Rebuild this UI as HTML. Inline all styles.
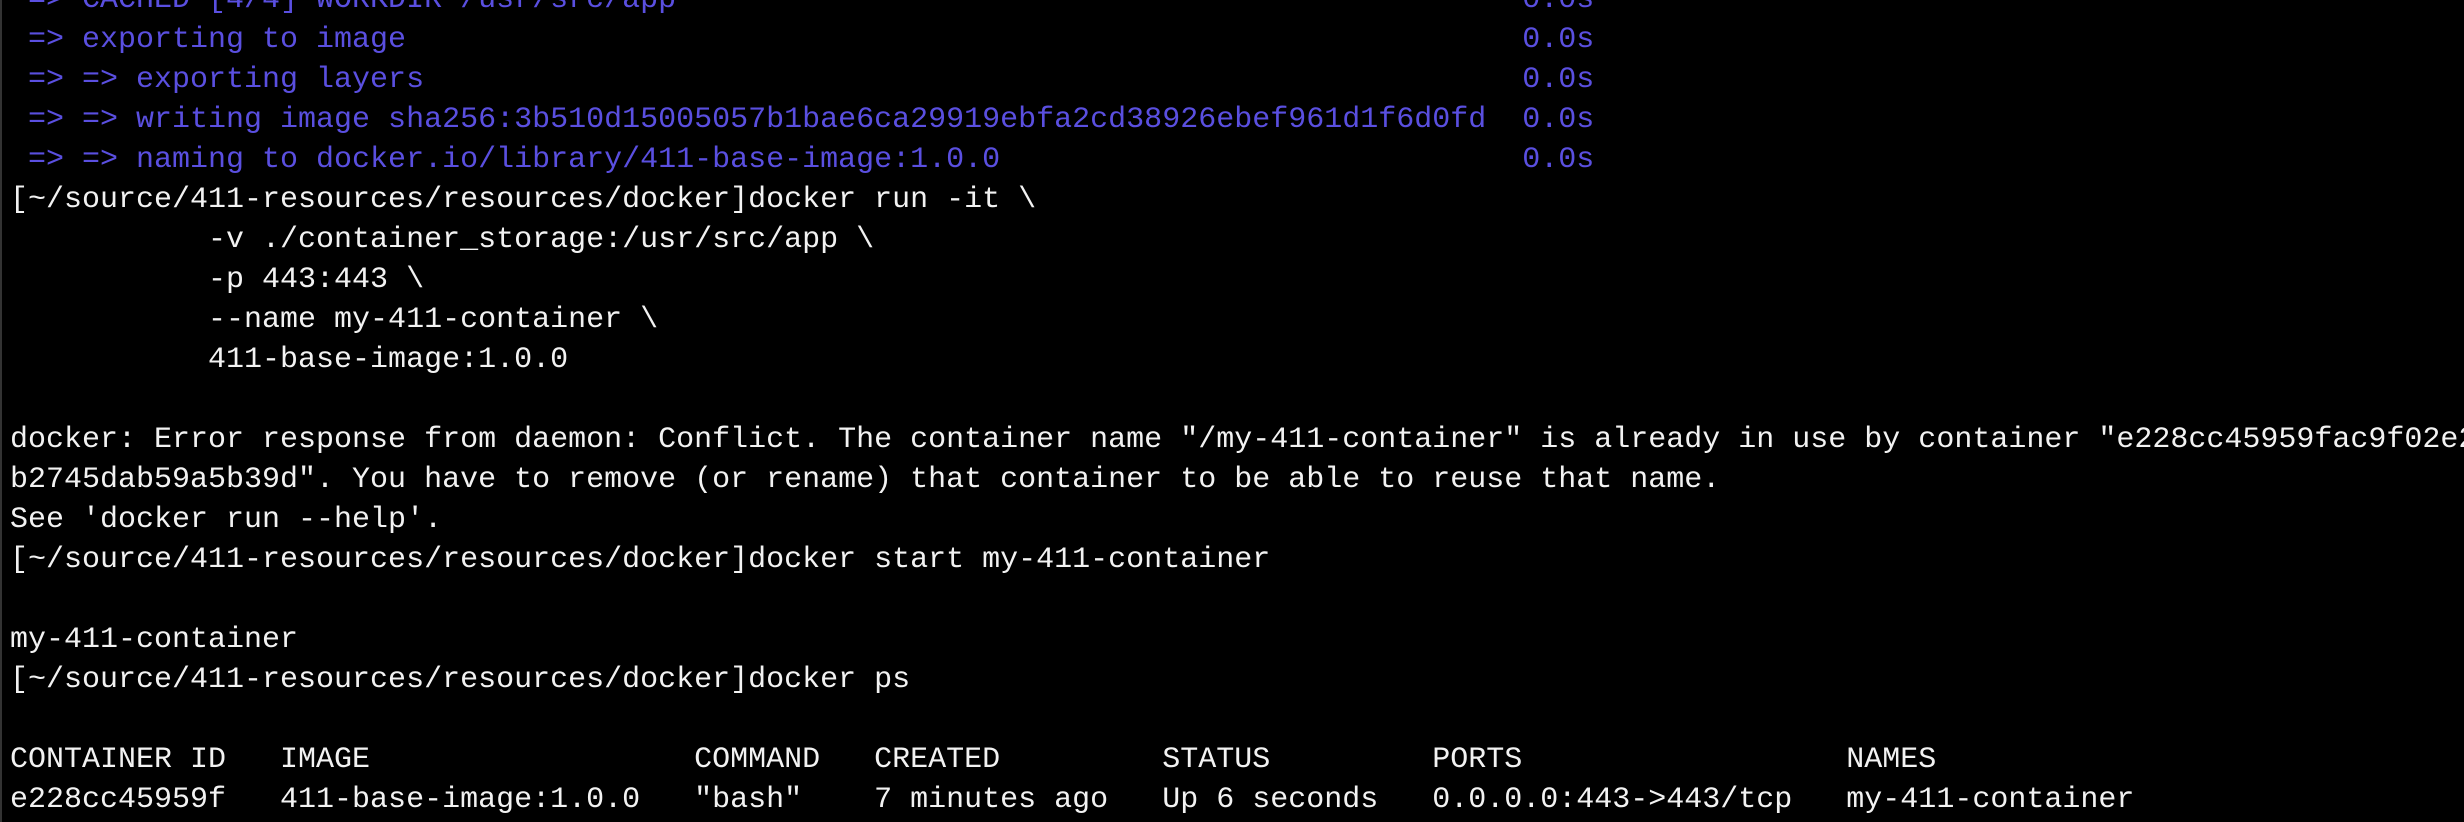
<!DOCTYPE html>
<html><head><meta charset="utf-8">
<style>
html,body{margin:0;padding:0;background:#000;width:2464px;height:822px;overflow:hidden;}
pre{margin:0;position:absolute;left:10px;top:-20px;font-family:"Liberation Mono",monospace;font-size:30px;line-height:40px;color:#f2f2f2;white-space:pre;}
.b{color:#5a4fe0;}
.edge{position:absolute;left:0;top:0;width:2px;height:822px;background:#333;}
</style></head><body>
<div class="edge"></div>
<pre><span class="b"> => CACHED [4/4] WORKDIR /usr/src/app                                               0.0s
 => exporting to image                                                              0.0s
 => => exporting layers                                                             0.0s
 => => writing image sha256:3b510d15005057b1bae6ca29919ebfa2cd38926ebef961d1f6d0fd  0.0s
 => => naming to docker.io/library/411-base-image:1.0.0                             0.0s</span>
[~/source/411-resources/resources/docker]docker run -it \
           -v ./container_storage:/usr/src/app \
           -p 443:443 \
           --name my-411-container \
           411-base-image:1.0.0

docker: Error response from daemon: Conflict. The container name "/my-411-container" is already in use by container "e228cc45959fac9f02e2
b2745dab59a5b39d". You have to remove (or rename) that container to be able to reuse that name.
See 'docker run --help'.
[~/source/411-resources/resources/docker]docker start my-411-container

my-411-container
[~/source/411-resources/resources/docker]docker ps

CONTAINER ID   IMAGE                  COMMAND   CREATED         STATUS         PORTS                  NAMES
e228cc45959f   411-base-image:1.0.0   "bash"    7 minutes ago   Up 6 seconds   0.0.0.0:443->443/tcp   my-411-container</pre>
</body></html>
